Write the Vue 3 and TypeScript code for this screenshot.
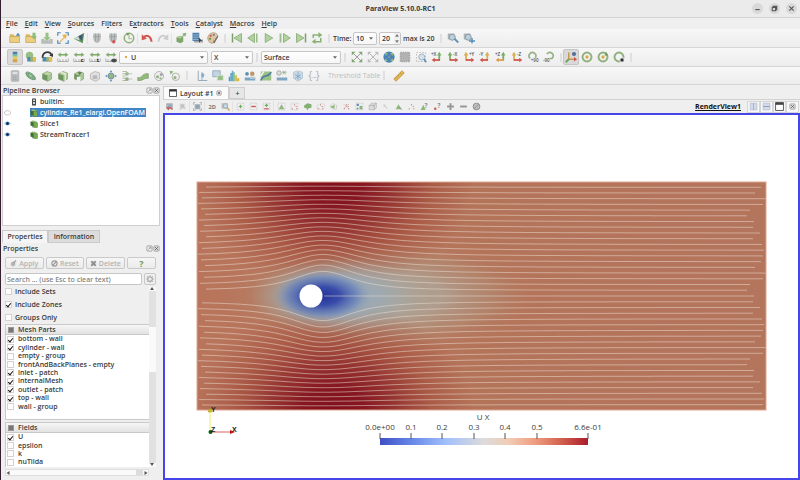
<script setup lang="ts">
import { ref } from 'vue'

interface Tool {
  icon: string
  label: string
  active?: boolean
  dim?: boolean
}

const t = (icon: string, label: string, flags: Partial<Tool> = {}): Tool => ({ icon, label, ...flags })

const folder = '<path d="M1 3h5l1 2h7v9H1z" fill="#d9b04c"/><path d="M1 6h13v8H1z" fill="#ecca72" stroke="#b28c38" stroke-width=".7"/>'
const cube = '<path d="M2 5l6-3 6 2-5 3z" fill="#b4d394"/><path d="M2 5l7 2v8l-7-3z" fill="#5c8a4b"/><path d="M9 7l5-3v8l-5 3z" fill="#9cc284"/><path d="M2 5l6-3 6 2v8l-5 3-7-3z" fill="none" stroke="#6b8a58" stroke-width=".8"/>'
const server = '<path d="M3 2h10v6c0 4-3 6-5 7-2-1-5-3-5-7z" fill="#b4b8b7"/><path d="M6 2v11M10 2v11M3 6h10" stroke="#8d9293"/>'
const dashed = '<rect x="2" y="2" width="12" height="12" fill="none" stroke="#999" stroke-width=".9" stroke-dasharray="2 2"/>'
const arrowH = '<path d="M1 5l4-3v2h6V2l4 3-4 3V6H5v2z" fill="#6f9f5b"/><path d="M1 10v4h14v-4M4 11v3M8 11v3M12 11v3" fill="none" stroke="#888" stroke-width=".9"/>'
const magnifier = '<rect x="1" y="2" width="9" height="8" rx="1" fill="#a5acae"/><circle cx="7" cy="7" r="4" fill="#b5cbdb" stroke="#7f909b" stroke-width="1.3"/>'
const xArrows = (c: string) => `<path d="M3 3l10 10M13 3L3 13" stroke="#888" stroke-width="1.2"/><path d="M1 1h5L1 6zM15 1h-5l5 5zM1 15h5l-5-5zM15 15h-5l5-5z" fill="${c}"/>`
const axis = (text: string, flip: boolean, up: string, side: string) => flip
  ? `<path d="M11 13V4" stroke="${up}" stroke-width="2.4"/><path d="M8 6l3-5 3 5z" fill="${up}"/><path d="M12 12H4" stroke="${side}" stroke-width="2.4"/><path d="M5 9L1 12l4 3z" fill="${side}"/><text x="0" y="7" font-size="6" fill="#333">${text}</text>`
  : `<path d="M4 13V4" stroke="${up}" stroke-width="2.4"/><path d="M1 6l3-5 3 5z" fill="${up}"/><path d="M4 12h8" stroke="${side}" stroke-width="2.4"/><path d="M11 9l4 3-4 3z" fill="${side}"/><text x="8" y="7" font-size="6" fill="#333">${text}</text>`
const ring = '<circle cx="8" cy="8" r="6" fill="none" stroke="#83a86e" stroke-width="2.6"/>'
const tri = '<path d="M8 4l5 9H3z" fill="#7fae68"/>'
const dots = '<g fill="#b5534b"><circle cx="4" cy="12" r="1.1"/><circle cx="8" cy="5" r="1.1"/><circle cx="12" cy="12" r="1.1"/><circle cx="11" cy="8" r="1"/></g>'

const icons: Record<string, string> = {
  open: folder + '<path d="M9 5l3-4 3 4z" fill="#347cb4"/>',
  recent: folder + '<path d="M10 1h4v5h2l-4 4-4-4h2z" fill="#84b46b"/>',
  save: '<path d="M1 10v5h14v-5h-3l-2 2H6l-2-2z" fill="#b5bab8" stroke="#8f9693" stroke-width=".7"/><path d="M6 1h4v6h3l-5 5-5-5h3z" fill="#8dbb74"/>',
  capture: '<path d="M1 5V1h4M11 1h4v4M15 11v4h-4M5 15H1v-4" fill="none" stroke="#337bb5" stroke-width="1.6"/><path d="M3 13l6-6-2-3 6-1-1 6-2-1-6 6z" fill="#e7a932"/>',
  anim: '<path d="M1 9L15 1l-2 14z" fill="#4e8a4c"/><path d="M7 6l6-3-1 9z" fill="#27406e"/><path d="M1 9l6-3 2 5z" fill="#cdd5d5"/>',
  connect: server,
  disconnect: server + '<circle cx="9" cy="13" r="2.2" fill="#cf4040"/>',
  reload: '<circle cx="8" cy="8" r="6.3" fill="none" stroke="#7ea765" stroke-width="2"/><path d="M8 4v5h4" fill="none" stroke="#9cba85" stroke-width="1.6"/><path d="M4 1l5 1-3 3z" fill="#5f8b49"/>',
  undo: '<path d="M3 8c3-5 10-4 11 5" fill="none" stroke="#cc4338" stroke-width="2.8"/><path d="M1 3l7 6-7 2z" fill="#cc4338"/>',
  redo: '<path d="M13 8C10 3 3 4 2 13" fill="none" stroke="#c6c8c8" stroke-width="2.4"/><path d="M15 3L8 9l7 2z" fill="#c6c8c8"/>',
  sync: '<path d="M2 7l5-2 4 2v6l-4 2-5-2z" fill="#6f9b5b"/><path d="M2 7l5-2 4 2-4 2z" fill="#a8c893"/><path d="M7 8l4-4-1-2 5-1-1 5-2-1-4 4z" fill="#7aa764"/>',
  find: '<path d="M2 1h9v11H2z" fill="#3b72a3"/><path d="M2 4h9M2 7h9M2 10h9" stroke="#8db8d8"/><path d="M4 13h11v-3" fill="none" stroke="#999" stroke-width="2"/><path d="M10 7l5 5-3 0-1 3z" fill="#222"/>',
  palette: '<path d="M8 1c5 0 7 3 6 6s-4 1-5 3 1 5-2 5c-4 0-6-4-6-7s3-7 7-7z" fill="#dcc19a" stroke="#8f7650" stroke-width=".8"/><circle cx="5" cy="5" r="1.5" fill="#c44"/><circle cx="9" cy="4" r="1.4" fill="#47a"/><circle cx="4" cy="9" r="1.5" fill="#583"/><path d="M8 14l6-9 1 1-5 9z" fill="#654"/>',
  first: '<path d="M2 2v12" stroke="#6d9657" stroke-width="2"/><path d="M14 2v12L4 8z" fill="#a9cd94" stroke="#709c5a"/>',
  prev: '<path d="M10 2v12L1 8z" fill="#a9cd94" stroke="#709c5a"/><path d="M13 2v12" stroke="#8fb57b" stroke-width="2"/>',
  play: '<path d="M3 2v12l10-6z" fill="#a9cd94" stroke="#709c5a"/>',
  next: '<path d="M6 2v12l9-6z" fill="#a9cd94" stroke="#709c5a"/><path d="M2 2v12" stroke="#8fb57b" stroke-width="2.4"/>',
  last: '<path d="M2 2v12l10-6z" fill="#a9cd94" stroke="#709c5a"/><path d="M14 2v12" stroke="#6d9657" stroke-width="2"/>',
  loop: '<path d="M3 8V4h8M13 8v5H5" fill="none" stroke="#7ba965" stroke-width="2"/><path d="M10 0l5 4-5 4zM6 9l-5 4 5 3z" fill="#7ba965"/>',
  zoomTime: magnifier + '<path d="M10 9l5 5" stroke="#4a86b0" stroke-width="2.4"/>',
  addTime: magnifier + '<path d="M12 8v7M8 12h8" stroke="#3f82b5" stroke-width="2"/>',
  legend: '<path d="M5 1h6v4H5z" fill="#3c6ea5"/><path d="M5 4h6v4H5z" fill="#68b7a8"/><path d="M5 7h6v4H5z" fill="#d7cf5b"/><path d="M5 11h6v4H5z" fill="#d89a35"/>',
  editMap: '<circle cx="6" cy="6" r="5" fill="#8cb975"/><path d="M3 8h11v6H3z" fill="#3c7aa9"/><path d="M7 8h3v6H7z" fill="#7fb069"/><path d="M10 8h4v6h-4z" fill="#e3b53b"/>',
  separate: '<path d="M2 8h12v6H2z" fill="#3c7aa9"/><path d="M7 8h3v6H7z" fill="#7fb069"/><path d="M10 8h5v6h-5z" fill="#e3b53b"/><path d="M2 9c0-8 9-10 12-4" stroke="#222" fill="none" stroke-width="2.4"/><path d="M11 6l5-3v5z" fill="#222"/>',
  rescale: arrowH,
  rescaleC: arrowH + '<text x="10" y="15" font-size="8" font-weight="700" fill="#111">c</text>',
  rescaleT: arrowH + '<text x="10" y="15" font-size="8" font-weight="700" fill="#111">t</text>',
  rescaleV: arrowH + '<path d="M8 13c2-4 6-4 8 0-2 3-6 3-8 0z" fill="#333"/>',
  reset: xArrows('#6d9d59'),
  resetData: xArrows('#9aa09a'),
  closest: '<circle cx="8" cy="8" r="7.5" fill="#2f76ad"/><g transform="translate(2 2) scale(.75)">' + xArrows('#8eb36d') + '</g>',
  closestData: '<path d="M2 2h12v12H2z" fill="#aaa" stroke="#999" stroke-width="2" stroke-dasharray="2 1"/>',
  box: dashed + '<circle cx="9" cy="8" r="4" fill="#cfe2ef" stroke="#879aa6"/><path d="M12 11l3 4" stroke="#4b83ac" stroke-width="2"/>',
  px: axis('+X', true, '#6da44e', '#c8433a'),
  mx: axis('-X', false, '#6da44e', '#c8433a'),
  py: axis('+Y', false, '#d5a63b', '#c8433a'),
  my: axis('-Y', true, '#d5a63b', '#c8433a'),
  pz: axis('+Z', true, '#6da44e', '#d5963b'),
  mz: axis('-Z', false, '#d5a63b', '#c8433a'),
  rotR: '<path d="M4 10C0 5 6 0 10 3c3 2 2 5 1 6" fill="none" stroke="#88a975" stroke-width="2.2"/><text x="5" y="15" font-size="6" fill="#444">+90</text>',
  rotL: '<path d="M5 4c5-5 12 1 7 6H9" fill="none" stroke="#88a975" stroke-width="2.2"/><text x="0" y="15" font-size="6" fill="#444">-90</text>',
  axes: '<path d="M5 2v9h8" fill="none" stroke="#c98e37" stroke-width="2"/><path d="M5 11l-4 4" stroke="#5e9c4d" stroke-width="2.4"/><path d="M12 8l4 3-4 3z" fill="#c8433a"/><circle cx="12" cy="4" r="2.8" fill="#46608e"/>',
  center: ring + '<circle cx="8" cy="8" r="2.200" fill="#d99e31"/>',
  centerReset: ring + '<circle cx="8" cy="8" r="2.200" fill="#d99e31"/><path d="M12 1l3 5h-5z" fill="#668b52"/>',
  pick: ring + '<path d="M9 9h6v6h-6z" fill="#f1f1f1"/><path d="M10 10h4v4h-4z" fill="#111"/>',
  calc: '<rect x="3" y="1" width="10" height="14" rx="1" fill="#b8bbbd" stroke="#9da0a2"/><path d="M5 3h6v2H5z" fill="#e9edf0"/><path d="M5 8h6M5 10.500h6M5 13h6" stroke="#777" stroke-dasharray="1.500 1"/>',
  contour: '<path d="M1 3c3-4 16 6 13 10C10 16-1 8 1 3z" fill="#5b8e50"/><path d="M3 3c3-1 11 6 9 9-3 1-11-6-9-9z" fill="none" stroke="#86b1cb"/><path d="M5 5c2 0 6 4 5 5-2 0-6-3-5-5z" fill="#9fc48a"/>',
  clip: cube,
  slice: cube + '<path d="M5 3l6 2v10" stroke="#e8efe2" stroke-width="1.500" fill="none"/>',
  threshold: cube + '<path d="M5 9h5v7H5z" fill="#f1f1f1"/><path d="M6 3l3 4 3-4z" fill="#3e6730"/>',
  extract: '<path d="M2 5l6-3 6 2v8l-5 3-7-3z" fill="#dedede" stroke="#a5a5a5"/><path d="M5 7h6v5H5z" fill="#b2b2b2"/>',
  glyph: '<circle cx="8" cy="8" r="4" fill="#89ae7a" stroke="#4e7593"/><path d="M8 0l2 3H6zM8 16l2-3H6zM0 8l3-2v4zM16 8l-3-2v4z" fill="#5e89a9"/>',
  stream: '<path d="M2 2h6M2 5h5M2 8h4M2 11h5M2 14h6" stroke="#8ea381"/><circle cx="8" cy="5" r="2.500" fill="#91b37e"/><circle cx="8" cy="12" r="2.500" fill="#8ba27e"/><path d="M10 5h5M10 12h5" stroke="#aaa"/>',
  warp: '<path d="M1 10c6 2 5-6 14-5v6c-6-1-7 4-14 3z" fill="#86b46e" stroke="#6b9257"/>',
  group: '<circle cx="8" cy="8" r="6" fill="#eee" stroke="#999"/><circle cx="6" cy="9" r="2" fill="#83a870"/><circle cx="11" cy="6" r="2" fill="#999"/><circle cx="10" cy="11" r="1.500" fill="#83a870"/>',
  level: '<circle cx="9" cy="9" r="5" fill="#eee" stroke="#909a8c"/><circle cx="8" cy="10" r="2" fill="#83a870"/><path d="M1 1l5 1-4 4z" fill="#7ba965"/>',
  plotLine: '<path d="M3 1v13h12" fill="none" stroke="#8199ad" stroke-width="1.200"/><path d="M8 13V3" stroke="#4b88b5"/><ellipse cx="9" cy="7" rx="2" ry="3" fill="#79a9cb"/>',
  selection: '<path d="M1 1h10v8H1z" fill="#bdd0df" stroke="#7396b1"/><path d="M7 7h8v7H7z" fill="#8fb979" stroke="#d8e4ef"/>',
  histogram: '<path d="M1 15V9h2v6" fill="#348cc0"/><path d="M3 15V4h2V1h2v14" fill="#51a1c7"/><path d="M7 15V3h2v12" fill="#62ab72"/><path d="M9 15V7h3v8" fill="#ccc13c"/><path d="M12 15v-4h3v4" fill="#e5ab28"/>',
  people: '<circle cx="4" cy="5" r="2.500" fill="#4b83aa"/><circle cx="11" cy="5" r="3" fill="#b88b51"/><path d="M1 10h14v4H1z" fill="#6c9cbd"/><path d="M8 9h7v3H8z" fill="#acc3d3"/>',
  plotTime: '<path d="M1 2h14v12H1z" fill="#8fbb78"/><path d="M1 14C5 4 9 12 15 3" stroke="#376d9a" fill="none" stroke-width="2"/><path d="M5 2L1 8" stroke="#edf5e6" stroke-width="2"/>',
  query: '<circle cx="4" cy="4" r="3" fill="#dadada" stroke="#909090"/><path d="M8 3h6M9 1l4 5M13 1L9 6" stroke="#7ca36b"/><path d="M1 10h14v4H1z" fill="#6f9cbd"/>',
  program: '<path d="M2 3l6-2 6 2v8l-6 4-6-4z" fill="#c7d7e3" stroke="#a7bacb"/><path d="M8 3v10M4 6l8 5M12 6l-8 5" stroke="#5c96c2"/>',
  braces: '<path d="M5 2H3v5L1 8l2 1v5h2M11 2h2v5l2 1-2 1v5h-2" fill="none" stroke="#8798a5" stroke-width="1.300"/><path d="M5 10h1M8 10h1M10 10h1" stroke="#6688a1" stroke-width="1.500"/>',
  ruler: '<path d="M1 12L12 1l3 3L4 15z" fill="#e2b13c" stroke="#ab7d24"/><path d="M4 10l1 1M7 7l1 1M10 4l1 1" stroke="#765818"/>',
  camUndo: '<path d="M3 3h10v9H3z" fill="#aaa" stroke="#888"/><circle cx="8" cy="7" r="3" fill="#7ba0bd"/><path d="M2 9l7 1-3 5z" fill="#c5443e"/><path d="M4 12c4-4 8-2 9 2" stroke="#c5443e" stroke-width="2" fill="none"/>',
  camRedo: '<path d="M3 3h9v9H3z" fill="#d0d0d0"/><circle cx="8" cy="7" r="3" fill="#bbb"/><path d="M4 14c2-6 6-5 9-2" stroke="#c5c5c5" stroke-width="2" fill="none"/>',
  camera: '<path d="M1 5V1h3M12 1h3v4M15 11v4h-3M4 15H1v-4" fill="none" stroke="#777"/><path d="M3 4h10v9H3z" fill="#9ba2a6"/><circle cx="8" cy="8" r="3" fill="#7499b3"/>',
  twoD: '<text x="1" y="12" font-size="10" font-weight="700" fill="#666">2D</text>',
  boxZoom: '<path d="M1 2h11v10H1z" fill="#b3b8ba"/><circle cx="8" cy="7" r="4" fill="#bed3e0" stroke="#758690"/><path d="M11 10l4 5" stroke="#c99b39" stroke-width="2.500"/>',
  selAdd: dashed + '<path d="M8 5v6M5 8h6" stroke="#5f9e49" stroke-width="2.200"/>',
  selSub: dashed + '<path d="M4 8h8" stroke="#cc3935" stroke-width="2.400"/>',
  selTog: dashed + '<path d="M8 3v6M5 6h6" stroke="#5f9e49" stroke-width="2"/><path d="M4 12h8" stroke="#cc3935" stroke-width="2"/>',
  selCell: dashed + tri,
  selPoint: dashed + dots,
  frustCell: '<path d="M2 6l6-4 7 2v6l-5 1-2 4-2-4-4-1z" fill="#74a65c"/>',
  frustPoint: '<path d="M2 6l6-4 7 2v6l-5 4-8-3z" fill="none" stroke="#bbb" stroke-dasharray="2 1"/>' + dots,
  polyCell: '<path d="M2 7l5-4 7 3-1 7-7-1z" fill="none" stroke="#999" stroke-dasharray="2 1"/><path d="M2 9l8-4v7z" fill="#7fae68"/>',
  polyPoint: dots + '<path d="M3 4l9 8M12 4l-9 8" stroke="#a76b66" stroke-dasharray="2 1"/>',
  block: dashed + '<path d="M3 3h4v4H3zM3 10h3v3H3z" fill="#4a83a9"/><path d="M8 7h5v6H8z" fill="#79a961"/>',
  blockThru: '<path d="M2 6l4-4h9v8l-4 4H2z" fill="#d9d9d9" stroke="#888" stroke-dasharray="2 1"/><path d="M2 6h9v8M11 6l4-4" fill="none" stroke="#888"/>',
  hover: '<circle cx="6" cy="6" r="2" fill="#ccc"/><path d="M7 7l4 5" stroke="#b5b5b5" stroke-width="1.500"/>',
  interCell: tri + '<path d="M10 9l4 5" stroke="#555"/>',
  interPoint: dots,
  hoverCell: '<path d="M6 5l4 9H1z" fill="#7fae68"/><text x="8" y="10" font-size="11" font-weight="700" fill="#777">?</text>',
  hoverPoint: '<circle cx="4" cy="12" r="2.200" fill="#c4443e"/><text x="8" y="11" font-size="11" font-weight="700" fill="#777">?</text>',
  grow: '<path d="M8 2v12M2 8h12" stroke="#888" stroke-width="3.500"/>',
  shrink: '<path d="M2 8h12" stroke="#888" stroke-width="3.500"/>',
  clear: '<circle cx="8" cy="8" r="6" fill="#b5b5b5" stroke="#777" stroke-width="1.500"/><path d="M4 12l8-8" stroke="#777" stroke-width="1.500"/>',
  splitH: '<path d="M2 2h12v12H2z" fill="#d3dbea" stroke="#a7b2c8"/><path d="M8 2v12" stroke="#a0acc4" stroke-width="1.500"/>',
  splitV: '<path d="M2 2h12v12H2z" fill="#d3dbea" stroke="#a7b2c8"/><path d="M2 8h12" stroke="#8794b0" stroke-width="1.500"/>',
  maximize: '<path d="M1 1h14v14H1z" fill="#fff" stroke="#444" stroke-width="1.500"/><path d="M1 1h14v4H1z" fill="#444"/>',
  close: '<rect x="2" y="2" width="12" height="12" rx="2" fill="#e2e2e2" stroke="#888" stroke-width="1.500"/><path d="M5 5l6 6M11 5l-6 6" stroke="#555" stroke-width="2"/>',
  float: '<rect x="2" y="2" width="12" height="12" rx="2" fill="#eee" stroke="#888" stroke-width="1.500"/><path d="M5 11l5-5M7 5h4v4" stroke="#777" fill="none" stroke-width="1.300"/>',
  host: '<path d="M8 0v16" stroke="#aaa"/><rect x="4" y="1" width="8" height="14" rx="1" fill="#484b4b"/><path d="M6 3h4v3H6zM6 8h4v4H6z" fill="#d5d5d5"/>',
  source: '<path d="M5 0v16" stroke="#aaa"/><path d="M1 3l7-2 7 3-6 2z" fill="#94bb76"/><path d="M1 3l7 2v9l-7-3z" fill="#3d6d35"/><rect x="7" y="5" width="8" height="10" rx="1" fill="#76a950" stroke="#52833a"/>',
  eye: '<path d="M0 8c4-6 12-6 16 0-4 6-12 6-16 0z" fill="#bdd0dc"/><circle cx="8" cy="8" r="4" fill="#245783"/><circle cx="8" cy="8" r="1.700" fill="#06172a"/>',
  eyeOff: '<path d="M1 9c0-7 14-7 14 0 0 6-14 6-14 0z" fill="#fff" stroke="#aaa" stroke-width="1.500"/>',
  window: '<path d="M1 1h14v14H1z" fill="#fff" stroke="#333" stroke-width="1.500"/><path d="M1 1h14v4H1z" fill="#333"/>',
  apply: '<path d="M2 6l6-3 4 3v6l-5 3-5-3z" fill="#b5b5b5"/><path d="M8 7l6-6" stroke="#a5a5a5" stroke-width="3"/>',
  resetBtn: '<circle cx="8" cy="8" r="6" fill="none" stroke="#999" stroke-width="2.500"/><path d="M4 12l8-8" stroke="#999" stroke-width="2.500"/>',
  deleteBtn: '<path d="M2 2h12v12H2z" fill="#ccc"/><path d="M3 3l10 10M13 3L3 13" stroke="#888" stroke-width="3.500"/>',
  gear: '<circle cx="8" cy="8" r="4.500" fill="none" stroke="#aaa" stroke-width="2.500"/><path d="M8 0v16M0 8h16M2 2l12 12M14 2L2 14" stroke="#aaa" stroke-width="1.500"/><circle cx="8" cy="8" r="3" fill="#eee"/>',
}

const menus = [
  ['', 'F', 'ile'], ['', 'E', 'dit'], ['', 'V', 'iew'], ['', 'S', 'ources'], ['Fi', 'l', 'ters'],
  ['E', 'x', 'tractors'], ['', 'T', 'ools'], ['', 'C', 'atalyst'], ['', 'M', 'acros'], ['', 'H', 'elp'],
]

const fileGroups: Tool[][] = [
  [t('open', 'Open'), t('recent', 'Load state'), t('save', 'Save data'), t('capture', 'Save screenshot'), t('anim', 'Save animation')],
  [t('connect', 'Connect'), t('disconnect', 'Disconnect'), t('reload', 'Reload')],
  [t('undo', 'Undo'), t('redo', 'Redo')],
  [t('sync', 'Auto apply'), t('find', 'Find data'), t('palette', 'Load palette')],
]
const playback: Tool[] = [t('first', 'First frame'), t('prev', 'Previous frame'), t('play', 'Play'), t('next', 'Next frame'), t('last', 'Last frame'), t('loop', 'Loop')]
const timeTools: Tool[] = [t('zoomTime', 'Zoom to data'), t('addTime', 'Add camera link')]
const colorTools: Tool[] = [
  t('legend', 'Toggle color legend', { active: true }), t('editMap', 'Edit color map'), t('separate', 'Use separate color map'),
  t('rescale', 'Rescale to data range'), t('rescaleC', 'Rescale to custom range'), t('rescaleT', 'Rescale over time'), t('rescaleV', 'Rescale to visible range'),
]
const cameraTools: Tool[] = [
  t('reset', 'Reset camera'), t('resetData', 'Zoom to data', { dim: true }), t('closest', 'Reset closest'), t('closestData', 'Zoom closest'), t('box', 'Zoom to box'),
  t('px', '+X view'), t('mx', '-X view'), t('py', '+Y view'), t('my', '-Y view'), t('pz', '+Z view'), t('mz', '-Z view'), t('rotR', 'Rotate clockwise'), t('rotL', 'Rotate counterclockwise'),
]
const centerTools: Tool[] = [t('axes', 'Orientation axes', { active: true }), t('center', 'Show center'), t('centerReset', 'Reset center'), t('pick', 'Pick center')]
const filterTools: Tool[] = [
  t('calc', 'Calculator'), t('contour', 'Contour'), t('clip', 'Clip'), t('slice', 'Slice'), t('threshold', 'Threshold'), t('extract', 'Extract subset'),
  t('glyph', 'Glyph'), t('stream', 'Stream tracer'), t('warp', 'Warp by vector'), t('group', 'Group datasets'), t('level', 'Extract level'),
]
const analysisTools: Tool[] = [
  t('plotLine', 'Plot over line'), t('selection', 'Extract selection'), t('histogram', 'Histogram'), t('people', 'Plot global variables'),
  t('plotTime', 'Plot selection over time'), t('query', 'Query'), t('program', 'Probe'), t('braces', 'Programmable filter', { dim: true }),
]
const viewGroups: Tool[][] = [
  [t('camUndo', 'Camera undo'), t('camRedo', 'Camera redo')],
  [t('camera', 'Capture view')],
  [t('twoD', 'Interaction mode'), t('boxZoom', 'Adjust camera')],
  [t('selAdd', 'Add selection'), t('selSub', 'Subtract selection'), t('selTog', 'Toggle selection')],
  [
    t('selCell', 'Select cells on'), t('selPoint', 'Select points on'), t('frustCell', 'Select cells through'), t('frustPoint', 'Select points through'),
    t('polyCell', 'Polygon cells'), t('polyPoint', 'Polygon points'), t('block', 'Select block'), t('blockThru', 'Blocks through'), t('hover', 'Hover'),
    t('interCell', 'Interactive cells'), t('interPoint', 'Interactive points'), t('hoverCell', 'Hover cells'), t('hoverPoint', 'Hover points'),
    t('grow', 'Grow selection'), t('shrink', 'Shrink selection'), t('clear', 'Clear selection'),
  ],
]
const frameTools: Tool[] = [t('splitH', 'Split horizontally'), t('splitV', 'Split vertically'), t('maximize', 'Maximize'), t('close', 'Close')]

const pipeline = [
  { name: 'builtin:', icon: 'host', eye: '' },
  { name: 'cylindre_Re1_elargi.OpenFOAM', icon: 'source', eye: 'eyeOff', selected: true },
  { name: 'Slice1', icon: 'source', eye: 'eye' },
  { name: 'StreamTracer1', icon: 'source', eye: 'eye' },
]

const options = ref([
  { name: 'Include Sets', on: false }, { name: 'Include Zones', on: true }, { name: 'Groups Only', on: false },
])
const meshParts = ref([
  { name: 'bottom - wall', on: true }, { name: 'cylinder - wall', on: true }, { name: 'empty - group', on: false },
  { name: 'frontAndBackPlanes - empty', on: false }, { name: 'inlet - patch', on: true }, { name: 'internalMesh', on: true },
  { name: 'outlet - patch', on: true }, { name: 'top - wall', on: true }, { name: 'wall - group', on: false },
])
const fields = ref([
  { name: 'U', on: true }, { name: 'epsilon', on: false }, { name: 'k', on: false }, { name: 'nuTilda', on: false }, { name: 'nut', on: false },
])

const time = ref('20')
const search = ref('')

// Streamlines around the cylinder, in plot coordinates (569 x 228, cylinder at 114,114).
const MID = 114
const SPACING = 5.72
const starts = [2, 7, 3, 9, 2, 5, 1, 4, 8]
const ends = [557, 556, 563, 556, 565, 567, 566, 564, 558, 569, 566, 553, 550]

function streamline(k: number): string {
  const offset = k * SPACING
  const d = Math.abs(offset)
  const side = Math.sign(offset)
  const peak = 24 * (1 - d / MID) * (1 - 0.3 * Math.exp(-d / 10))
  const half = 40 + d * 0.5
  const from = k === 0 ? 127 : starts[(k + 40) % starts.length]
  const to = ends[(k + 39) % ends.length]
  const points: string[] = []
  for (let x = from; x < to; x += 5) {
    const u = (x - 126) / half
    const lift = k === 0 ? 0 : peak / Math.pow(1 + u * u, 1.3)
    points.push(`${x},${(MID + offset + side * lift).toFixed(1)}`)
  }
  points.push(`${to},${(MID + offset).toFixed(1)}`)
  return points.join(' ')
}
const streamlines = Array.from({ length: 39 }, (_, i) => streamline(i - 19))

const ticks = [
  { x: 215, label: '0.0e+00' }, { x: 246, label: '0.1' }, { x: 277, label: '0.2' }, { x: 309, label: '0.3' },
  { x: 340, label: '0.4' }, { x: 372, label: '0.5' }, { x: 423, label: '6.6e-01' },
]
</script>

<template>
  <div class="app">
    <header class="titlebar">
      <span></span>
      <h1>ParaView 5.10.0-RC1</h1>
      <div class="window-buttons">
        <button aria-label="Minimize"><svg viewBox="0 0 10 10"><path d="M3 6h4" /></svg></button>
        <button aria-label="Restore"><svg viewBox="0 0 10 10"><path d="M3 4h3v3H3zM4 4V3h3v3H6" /></svg></button>
        <button aria-label="Close window"><svg viewBox="0 0 10 10"><path d="M3 3l4 4M7 3L3 7" /></svg></button>
      </div>
    </header>

    <nav class="menubar">
      <button v-for="m in menus" :key="m.join('')">{{ m[0] }}<u>{{ m[1] }}</u>{{ m[2] }}</button>
    </nav>

    <div class="toolbar">
      <template v-for="(g, i) in fileGroups" :key="i">
        <span v-if="i" class="sep"></span>
        <button v-for="b in g" :key="b.icon" class="tool" :aria-label="b.label"><svg viewBox="0 0 16 16" v-html="icons[b.icon]"></svg></button>
      </template>
      <span class="grip"></span>
      <button v-for="b in playback" :key="b.icon" class="tool" :aria-label="b.label"><svg viewBox="0 0 16 16" v-html="icons[b.icon]"></svg></button>
      <span class="grip"></span>
      <label class="time-label" for="time-step">Time:</label>
      <span class="combo combo-time">
        <select id="time-step"><option>10</option></select>
        <svg class="caret" viewBox="0 0 6 4"><path d="M0 0h6L3 4z" /></svg>
      </span>
      <span class="combo spin">
        <input v-model="time" type="text" aria-label="Time index" />
        <svg class="spin-arrows" viewBox="0 0 6 12"><path d="M1 4l2-3 2 3zM1 8l2 3 2-3z" /></svg>
      </span>
      <span class="time-max">max is 20</span>
      <span class="grip"></span>
      <button v-for="b in timeTools" :key="b.icon" class="tool" :aria-label="b.label"><svg viewBox="0 0 16 16" v-html="icons[b.icon]"></svg></button>
    </div>

    <div class="toolbar">
      <button v-for="b in colorTools" :key="b.icon" class="tool" :class="{ active: b.active }" :aria-label="b.label"><svg viewBox="0 0 16 16" v-html="icons[b.icon]"></svg></button>
      <span class="combo combo-array">
        <i class="point"></i>
        <select aria-label="Coloring array"><option>U</option></select>
        <svg class="caret" viewBox="0 0 6 4"><path d="M0 0h6L3 4z" /></svg>
      </span>
      <span class="combo combo-component">
        <select aria-label="Component"><option>X</option></select>
        <svg class="caret" viewBox="0 0 6 4"><path d="M0 0h6L3 4z" /></svg>
      </span>
      <span class="grip"></span>
      <span class="combo combo-repr">
        <select aria-label="Representation"><option>Surface</option></select>
        <svg class="caret" viewBox="0 0 6 4"><path d="M0 0h6L3 4z" /></svg>
      </span>
      <span class="grip"></span>
      <button v-for="b in cameraTools" :key="b.icon" class="tool" :class="{ dim: b.dim }" :aria-label="b.label"><svg viewBox="0 0 16 16" v-html="icons[b.icon]"></svg></button>
      <span class="grip narrow"></span>
      <button v-for="b in centerTools" :key="b.icon" class="tool" :class="{ active: b.active }" :aria-label="b.label"><svg viewBox="0 0 16 16" v-html="icons[b.icon]"></svg></button>
      <span class="grip"></span>
    </div>

    <div class="toolbar short">
      <button v-for="b in filterTools" :key="b.icon" class="tool" :aria-label="b.label"><svg viewBox="0 0 16 16" v-html="icons[b.icon]"></svg></button>
      <span class="grip wide"></span>
      <button v-for="b in analysisTools" :key="b.icon" class="tool" :class="{ dim: b.dim }" :aria-label="b.label"><svg viewBox="0 0 16 16" v-html="icons[b.icon]"></svg></button>
      <button class="threshold-table" disabled>Threshold Table</button>
      <span class="grip wide"></span>
      <button class="tool" aria-label="Ruler"><svg viewBox="0 0 16 16" v-html="icons.ruler"></svg></button>
    </div>

    <div class="workspace">
      <aside class="side">
        <div class="dock-title">
          <h2>Pipeline Browser</h2>
          <button aria-label="Float pipeline"><svg viewBox="0 0 16 16" v-html="icons.float"></svg></button>
          <button aria-label="Close pipeline"><svg viewBox="0 0 16 16" v-html="icons.close"></svg></button>
        </div>
        <div class="tree">
          <ul>
            <li v-for="p in pipeline" :key="p.name">
              <span class="eye"><svg v-if="p.eye" viewBox="0 0 16 16" v-html="icons[p.eye]"></svg></span>
              <span class="node" :class="{ selected: p.selected }"><svg viewBox="0 0 16 16" v-html="icons[p.icon]"></svg>{{ p.name }}</span>
            </li>
          </ul>
        </div>
        <div class="tabs">
          <button class="tab current">Properties</button>
          <button class="tab">Information</button>
        </div>
        <div class="dock-title">
          <h2>Properties</h2>
          <button aria-label="Float properties"><svg viewBox="0 0 16 16" v-html="icons.float"></svg></button>
          <button aria-label="Close properties"><svg viewBox="0 0 16 16" v-html="icons.close"></svg></button>
        </div>
        <div class="actions">
          <button disabled><svg viewBox="0 0 16 16" v-html="icons.apply"></svg>Apply</button>
          <button disabled><svg viewBox="0 0 16 16" v-html="icons.resetBtn"></svg>Reset</button>
          <button disabled><svg viewBox="0 0 16 16" v-html="icons.deleteBtn"></svg>Delete</button>
          <button class="help" aria-label="Help">?</button>
        </div>
        <div class="search">
          <input v-model="search" type="text" aria-label="Search properties" placeholder="Search ... (use Esc to clear text)" />
          <button aria-label="Advanced properties"><svg viewBox="0 0 16 16" v-html="icons.gear"></svg></button>
        </div>
        <div class="scroller">
          <div class="props">
            <div class="options">
              <label v-for="o in options" :key="o.name"><input v-model="o.on" type="checkbox" />{{ o.name }}</label>
            </div>
            <section class="group mesh">
              <h3><i></i>Mesh Parts</h3>
              <div class="checks">
                <label v-for="o in meshParts" :key="o.name"><input v-model="o.on" type="checkbox" />{{ o.name }}</label>
              </div>
            </section>
            <section class="group fields">
              <h3><i></i>Fields</h3>
              <div class="checks">
                <label v-for="o in fields" :key="o.name"><input v-model="o.on" type="checkbox" />{{ o.name }}</label>
              </div>
            </section>
          </div>
          <div class="vbar">
            <svg viewBox="0 0 6 4"><path d="M1 3l2-3 2 3z" /></svg>
            <div class="trough"></div>
            <div class="thumb"></div>
            <div class="trough long"></div>
            <svg viewBox="0 0 6 4"><path d="M1 0l2 3 2-3z" /></svg>
          </div>
        </div>
        <div class="hbar">
          <svg viewBox="0 0 4 6"><path d="M3 1L0 3l3 2z" /></svg>
          <div class="thumb"></div>
          <div class="trough"></div>
          <svg viewBox="0 0 4 6"><path d="M1 1l3 2-3 2z" /></svg>
        </div>
      </aside>

      <main class="main">
        <div class="layout-tabs">
          <div class="layout-tab">
            <svg viewBox="0 0 16 16" v-html="icons.window"></svg>
            <span>Layout #1</span>
            <button aria-label="Close layout"><svg viewBox="0 0 16 16" v-html="icons.close"></svg></button>
          </div>
          <button class="add-tab" aria-label="New layout">+</button>
        </div>
        <div class="view-bar">
          <template v-for="(g, i) in viewGroups" :key="i">
            <span v-if="i" class="sep"></span>
            <button v-for="b in g" :key="b.icon" class="mini" :aria-label="b.label"><svg viewBox="0 0 16 16" v-html="icons[b.icon]"></svg></button>
          </template>
          <strong>RenderView1</strong>
          <div class="frame-tools">
            <button v-for="b in frameTools" :key="b.icon" :aria-label="b.label"><svg viewBox="0 0 16 16" v-html="icons[b.icon]"></svg></button>
          </div>
        </div>
        <div class="view">
          <svg class="scene" viewBox="0 0 633 363" role="img" aria-label="Velocity field around a cylinder">
            <defs>
              <linearGradient id="base" x1="0" x2="1" y1="0" y2="0">
                <stop offset="0" stop-color="#b8755c" /><stop offset=".5" stop-color="#b4745a" /><stop offset="1" stop-color="#b4755d" />
              </linearGradient>
              <radialGradient id="lobe">
                <stop offset="0" stop-color="#80101d" /><stop offset=".22" stop-color="#84141f" stop-opacity=".97" />
                <stop offset=".45" stop-color="#8c2226" stop-opacity=".75" /><stop offset=".7" stop-color="#983428" stop-opacity=".38" />
                <stop offset="1" stop-color="#a04030" stop-opacity="0" />
              </radialGradient>
              <radialGradient id="tan">
                <stop offset="0" stop-color="#aba79b" /><stop offset=".4" stop-color="#aea395" stop-opacity=".85" />
                <stop offset=".7" stop-color="#b19078" stop-opacity=".55" /><stop offset="1" stop-color="#b57a5f" stop-opacity="0" />
              </radialGradient>
              <radialGradient id="pale">
                <stop offset="0" stop-color="#93a5bd" /><stop offset=".5" stop-color="#9caab4" stop-opacity=".85" /><stop offset="1" stop-color="#aaa59a" stop-opacity="0" />
              </radialGradient>
              <radialGradient id="blue">
                <stop offset="0" stop-color="#25339a" /><stop offset=".35" stop-color="#3548a8" stop-opacity=".97" />
                <stop offset=".7" stop-color="#6680ba" stop-opacity=".75" /><stop offset="1" stop-color="#93a6ba" stop-opacity="0" />
              </radialGradient>
              <linearGradient id="coolwarm">
                <stop offset="0" stop-color="#3f4fc3" /><stop offset=".15" stop-color="#6687e8" /><stop offset=".32" stop-color="#a2c0fb" />
                <stop offset=".5" stop-color="#dddcdb" /><stop offset=".62" stop-color="#f1ccb5" /><stop offset=".75" stop-color="#ee9b7d" />
                <stop offset=".88" stop-color="#d05c4b" /><stop offset="1" stop-color="#ab1c2d" />
              </linearGradient>
              <clipPath id="domain"><rect width="569" height="228" /></clipPath>
            </defs>

            <g transform="translate(32 67)">
              <g clip-path="url(#domain)">
                <rect width="569" height="228" fill="url(#base)" />
                <ellipse cx="182" cy="114" rx="160" ry="58" fill="url(#tan)" />
                <ellipse cx="136" cy="0" rx="142" ry="108" fill="url(#lobe)" />
                <ellipse cx="136" cy="228" rx="142" ry="108" fill="url(#lobe)" />
                <ellipse cx="142" cy="114" rx="88" ry="38" fill="url(#pale)" />
                <ellipse cx="125" cy="114" rx="50" ry="26" fill="url(#blue)" />
                <polyline v-for="(line, i) in streamlines" :key="i" :points="line" class="stream" />
              </g>
              <rect width="569" height="228" class="outline" />
              <circle cx="114" cy="114" r="11.500" fill="#fff" />
            </g>

            <g class="triad">
              <path d="M45 317V296" stroke="#f0ef5a" />
              <path d="M46 317h21" stroke="#e26060" />
              <path d="M43 297l2-4 2 4z" fill="#c9c31d" stroke="#9c9716" stroke-width=".5" />
              <path d="M65 315l5 2-5 2z" fill="#c01616" />
              <circle cx="45.500" cy="317" r="2" fill="#0b5a12" />
              <text x="46" y="297">Y</text>
              <text x="46" y="317">Z</text>
              <text x="67" y="317">X</text>
            </g>

            <g class="legend">
              <text x="318" y="305">U X</text>
              <rect x="215" y="323" width="208" height="7" fill="url(#coolwarm)" />
              <g v-for="tick in ticks" :key="tick.x">
                <path :d="`M${tick.x} 318v6`" />
                <text :x="tick.x" y="315">{{ tick.label }}</text>
              </g>
            </g>
          </svg>
        </div>
      </main>
    </div>
  </div>
</template>

<style>
body {
  background: #efefef;
}
</style>

<style scoped>
.app {
  display: flex;
  flex-direction: column;
  height: 100vh;
  box-sizing: border-box;
  border-left: 1px solid #35202f;
  background: #efefef;
  color: #3a3a3a;
  font: 600 7px/9px "Open Sans", "Noto Sans", sans-serif;
  overflow: hidden;
}
.app *, .app *::before {
  box-sizing: border-box;
}
button, input, select {
  font: inherit;
  color: inherit;
  margin: 0;
  padding: 0;
  border: 0;
  background: none;
}
h1, h2, h3, ul {
  margin: 0;
  padding: 0;
  font: inherit;
  list-style: none;
}
svg {
  display: block;
}
.titlebar {
  display: grid;
  grid-template-columns: 1fr auto 1fr;
  align-items: center;
  height: 18px;
  flex: none;
  background: #ebebeb;
  border-bottom: 1px solid #d3d3d3;
}
.titlebar h1 {
  font-weight: 700;
}
.window-buttons {
  display: flex;
  justify-content: flex-end;
  gap: 6px;
  padding-right: 3px;
}
.window-buttons button {
  width: 11px;
  height: 11px;
  border-radius: 50%;
  background: #d9d9d9;
}
.window-buttons path {
  fill: none;
  stroke: #555;
}
.menubar {
  display: flex;
  gap: 7px;
  height: 11px;
  flex: none;
  padding-left: 5px;
}
.toolbar {
  display: flex;
  align-items: center;
  height: 19px;
  flex: none;
  padding-left: 6px;
  background: linear-gradient(#f7f7f7, #ededed);
  border-bottom: 1px solid #d6d6d6;
}
.toolbar.short {
  height: 18px;
}
.tool {
  display: grid;
  place-items: center;
  width: 16px;
  height: 16px;
  flex: none;
}
.tool svg {
  width: 12px;
  height: 12px;
  opacity: .88;
}
.tool.active {
  background: #d9d9d9;
  border: 1px solid #c4c4c4;
  border-radius: 2px;
}
.tool.dim {
  opacity: .7;
}
.sep {
  width: 2px;
  height: 11px;
  flex: none;
  border-left: 1px solid #e2e2e2;
}
.grip {
  width: 8px;
  height: 9px;
  flex: none;
  background: linear-gradient(90deg, transparent 3px, #e0e0e0 3px, #e0e0e0 5px, transparent 5px);
}
.grip.wide {
  width: 11px;
}
.grip.narrow {
  width: 6px;
}
.combo {
  position: relative;
  display: flex;
  height: 13px;
  flex: none;
  background: linear-gradient(#fefefe, #f6f6f6);
  border: 1px solid #c6c6c6;
  border-radius: 2px;
}
.combo select, .combo input {
  appearance: none;
  width: 100%;
  height: 11px;
  padding-left: 2px;
  outline: 0;
}
.caret {
  position: absolute;
  right: 3px;
  top: 4px;
  width: 4px;
  height: 3px;
  fill: #666;
}
.time-label {
  width: 20px;
}
.time-max {
  padding: 0 2px;
}
.combo-time {
  width: 24px;
}
.spin {
  width: 22px;
  margin-left: 2px;
}
.spin-arrows {
  width: 6px;
  height: 11px;
  flex: none;
  fill: #777;
  background: #f0f0f0;
}
.combo-array {
  width: 89px;
  margin-right: 3px;
}
.combo-array select {
  padding-left: 4px;
}
.combo-component {
  width: 42px;
}
.combo-repr {
  width: 80px;
}
.point {
  width: 2px;
  height: 2px;
  margin: 4px 0 0 5px;
  flex: none;
  background: #e0a840;
}
.threshold-table {
  padding-left: 6px;
  font-weight: 500;
  color: #bdbdbd;
}
.workspace {
  display: flex;
  gap: 3px;
  flex: 1;
  min-height: 0;
}
.side {
  display: flex;
  flex-direction: column;
  width: 159px;
  flex: none;
  padding: 0 0 4px 1px;
}
.dock-title {
  display: flex;
  align-items: center;
  height: 10px;
  flex: none;
  padding-left: 1px;
}
.dock-title h2 {
  flex: 1;
}
.dock-title svg {
  width: 7px;
  height: 7px;
}
.tree {
  height: 131px;
  flex: none;
  margin-bottom: 4px;
  background: #fff;
  border: 1px solid #cfcfcf;
}
.tree ul {
  display: grid;
  grid-auto-rows: 1fr;
  height: 44px;
}
.tree li, .node {
  display: flex;
  align-items: center;
}
.eye {
  width: 27px;
  padding-left: 1px;
}
.eye svg {
  width: 7px;
  height: 7px;
}
.node {
  gap: 2px;
  height: 9px;
  padding-right: 1px;
  white-space: nowrap;
}
.node svg {
  width: 8px;
  height: 10px;
}
.selected {
  background: #4086c6;
  color: #fff;
  font-weight: 600;
}
.tabs {
  display: flex;
  flex: none;
  height: 13px;
}
.tab {
  width: 52px;
  padding: 1px 0;
  background: #dcdcdc;
  border: 1px solid #cacaca;
}
.tab.current {
  width: 46px;
  background: #f5f5f5;
  border-bottom-color: #f5f5f5;
}
.actions {
  display: flex;
  gap: 2px;
  flex: none;
  margin: 4px 4px 4px 3px;
}
.actions button {
  display: flex;
  align-items: center;
  justify-content: center;
  gap: 2px;
  flex: 4;
  height: 12px;
  color: #b4b4b4;
  background: linear-gradient(#f6f6f6, #ebebeb);
  border: 1px solid #c9c9c9;
  border-radius: 2px;
}
.actions svg {
  width: 7px;
  height: 7px;
}
.actions .help {
  flex: 3;
  font-weight: 700;
  font-size: 9px;
  color: #6f9a58;
}
.search {
  display: flex;
  gap: 2px;
  flex: none;
  margin: 0 4px 2px 3px;
}
.search input {
  flex: 1;
  min-width: 0;
  height: 12px;
  padding-left: 1px;
  background: #fff;
  border: 1px solid #c6c6c6;
  border-radius: 2px;
}
.search input::placeholder {
  color: #858585;
  opacity: 1;
}
.search button {
  display: grid;
  place-items: center;
  width: 12px;
  border: 1px solid #c9c9c9;
  border-radius: 2px;
}
.search svg {
  width: 8px;
  height: 8px;
}
.scroller {
  display: flex;
  flex: 1;
  min-height: 0;
  margin: 0 4px 0 3px;
}
.props {
  flex: 1;
  min-width: 0;
  overflow: hidden;
}
.options {
  display: grid;
  grid-auto-rows: 13px;
  align-items: center;
  height: 37px;
  align-content: end;
}
.options label, .checks label {
  display: flex;
  align-items: center;
  white-space: nowrap;
}
.options label {
  gap: 3px;
}
.checks label {
  gap: 4px;
}
input[type="checkbox"] {
  appearance: none;
  display: grid;
  place-items: center;
  width: 7px;
  height: 7px;
  flex: none;
  background: #fff;
  border: 1px solid #d2d2d2;
}
input[type="checkbox"]:checked::before {
  content: "";
  width: 3px;
  height: 5px;
  border: solid #151515;
  border-width: 0 1px 1px 0;
  transform: rotate(40deg);
}
.group {
  background: #fff;
  border: 1px solid #c9c9c9;
  border-right: 0;
}
.mesh {
  height: 96px;
  margin-bottom: 2px;
}
.group h3 {
  display: flex;
  align-items: center;
  gap: 4px;
  height: 10px;
  padding-left: 2px;
  background: linear-gradient(#f6f6f6, #e2e2e2);
  border-bottom: 1px solid #c9c9c9;
}
.group h3 i {
  width: 6px;
  height: 6px;
  background: #777;
  border: 1px solid #999;
}
.checks {
  display: grid;
  grid-auto-rows: minmax(0, 1fr);
  padding-left: 1px;
  line-height: 8px;
}
.mesh .checks {
  height: 76px;
}
.fields .checks {
  height: 42px;
}
.vbar {
  display: flex;
  flex-direction: column;
  width: 7px;
  background: #fafafa;
}
.vbar svg {
  width: 6px;
  height: 4px;
  fill: #555;
}
.vbar .trough {
  flex: 4;
  background: #e1e1e1;
}
.vbar .thumb {
  flex: 5;
}
.vbar .long {
  flex: 10;
}
.hbar {
  display: flex;
  align-items: center;
  height: 7px;
  flex: none;
  margin: 2px 11px 0 3px;
  background: #fafafa;
  border: 1px solid #dedede;
}
.hbar svg {
  width: 5px;
  height: 6px;
  fill: #555;
}
.hbar .thumb {
  flex: 1;
}
.hbar .trough {
  width: 7px;
  height: 5px;
  background: #dcdcdc;
}
.main {
  display: flex;
  flex-direction: column;
  flex: 1;
  min-width: 0;
  padding-top: 1px;
}
.layout-tabs {
  display: flex;
  align-items: flex-end;
  height: 14px;
  flex: none;
  border-bottom: 1px solid #d2d2d2;
}
.layout-tab {
  display: flex;
  align-items: center;
  gap: 3px;
  height: 13px;
  padding: 0 6px 0 5px;
  background: #fbfbfb;
  border: 1px solid #cfcfcf;
  border-bottom: 0;
}
.layout-tab > svg {
  width: 8px;
  height: 8px;
}
.layout-tab button svg {
  width: 6px;
  height: 6px;
}
.add-tab {
  width: 16px;
  height: 12px;
  background: #e6e6e6;
  border: 1px solid #cfcfcf;
}
.view-bar {
  display: flex;
  align-items: center;
  height: 13px;
  flex: none;
}
.mini {
  display: grid;
  place-items: center;
  width: 13px;
  height: 12px;
  flex: none;
}
.mini svg {
  width: 9px;
  height: 9px;
  opacity: .85;
}
.view-bar strong {
  margin-left: auto;
  font-weight: 700;
  color: #111;
  text-decoration: underline;
}
.frame-tools {
  display: flex;
  margin: 0 1px 0 6px;
}
.frame-tools button {
  display: grid;
  place-items: center;
  width: 13px;
  height: 12px;
  background: #f7f7f7;
  border: 1px solid #d6d6d6;
}
.frame-tools svg {
  width: 9px;
  height: 9px;
}
.frame-tools button:last-child svg {
  width: 7px;
  height: 7px;
}
.view {
  flex: 1;
  min-height: 0;
  background: #fff;
  border: 2px solid #4545ea;
}
.scene {
  width: 100%;
  height: 100%;
}
.stream {
  fill: none;
  stroke: #ecdfd3;
  stroke-opacity: .65;
  stroke-width: .8;
}
.outline {
  fill: none;
  stroke: #dfa58f;
}
.triad text {
  font: 700 7px "Liberation Sans", sans-serif;
  fill: #222;
}
.legend text {
  font: 400 8px "Open Sans", sans-serif;
  fill: #3c3c3c;
  text-anchor: middle;
}
.legend path {
  stroke: #555;
}
</style>
